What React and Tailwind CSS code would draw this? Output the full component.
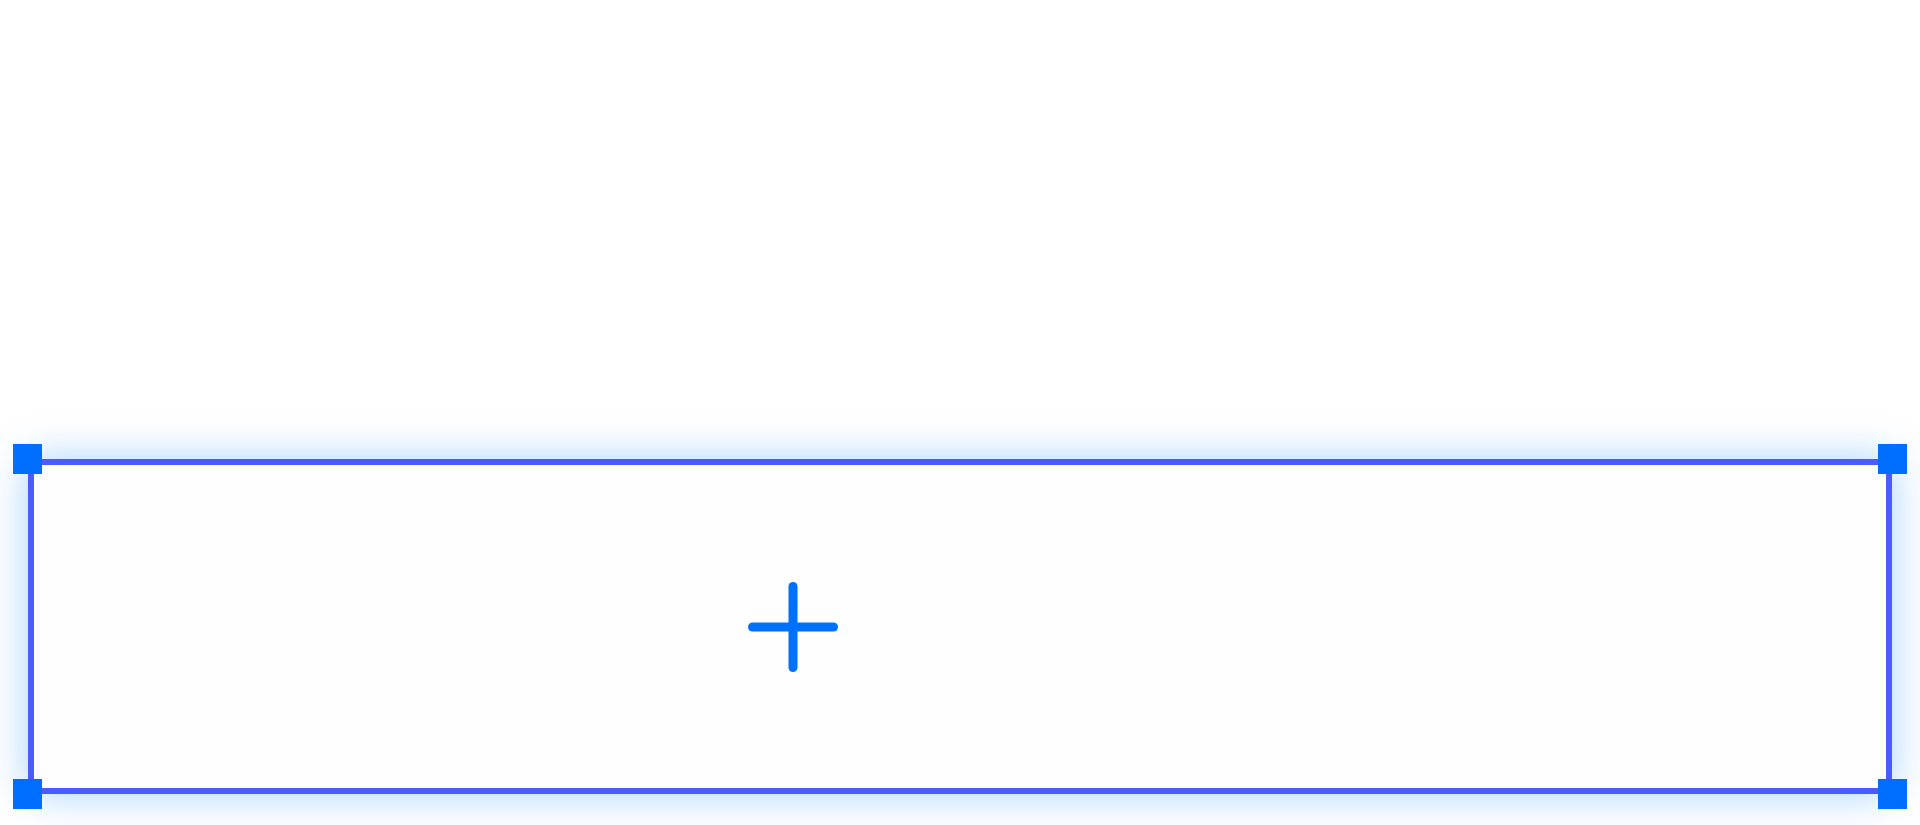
export default function App() {
  return (
    <div className="w-full h-[825px] bg-white overflow-hidden flex flex-col pt-[459px] px-[28px]">
      <div className="relative h-[335px] border-[6px] border-[#4b5bff] bg-[#fefefe] shadow-[0_0_40px_rgba(0,128,255,0.35)] flex items-center pl-[714px]">
        <svg width="90" height="90" viewBox="0 0 90 90" fill="none">
          <line x1="45" y1="4.5" x2="45" y2="85.5" stroke="#0070ff" strokeWidth="9" strokeLinecap="round" />
          <line x1="4.5" y1="45" x2="85.5" y2="45" stroke="#0070ff" strokeWidth="9" strokeLinecap="round" />
        </svg>
        <div className="absolute -left-[21px] -top-[21px] w-[29px] h-[30px] bg-[#006eff]" />
        <div className="absolute -right-[21px] -top-[21px] w-[29px] h-[30px] bg-[#006eff]" />
        <div className="absolute -left-[21px] -bottom-[21px] w-[29px] h-[30px] bg-[#006eff]" />
        <div className="absolute -right-[21px] -bottom-[21px] w-[29px] h-[30px] bg-[#006eff]" />
      </div>
    </div>
  );
}
